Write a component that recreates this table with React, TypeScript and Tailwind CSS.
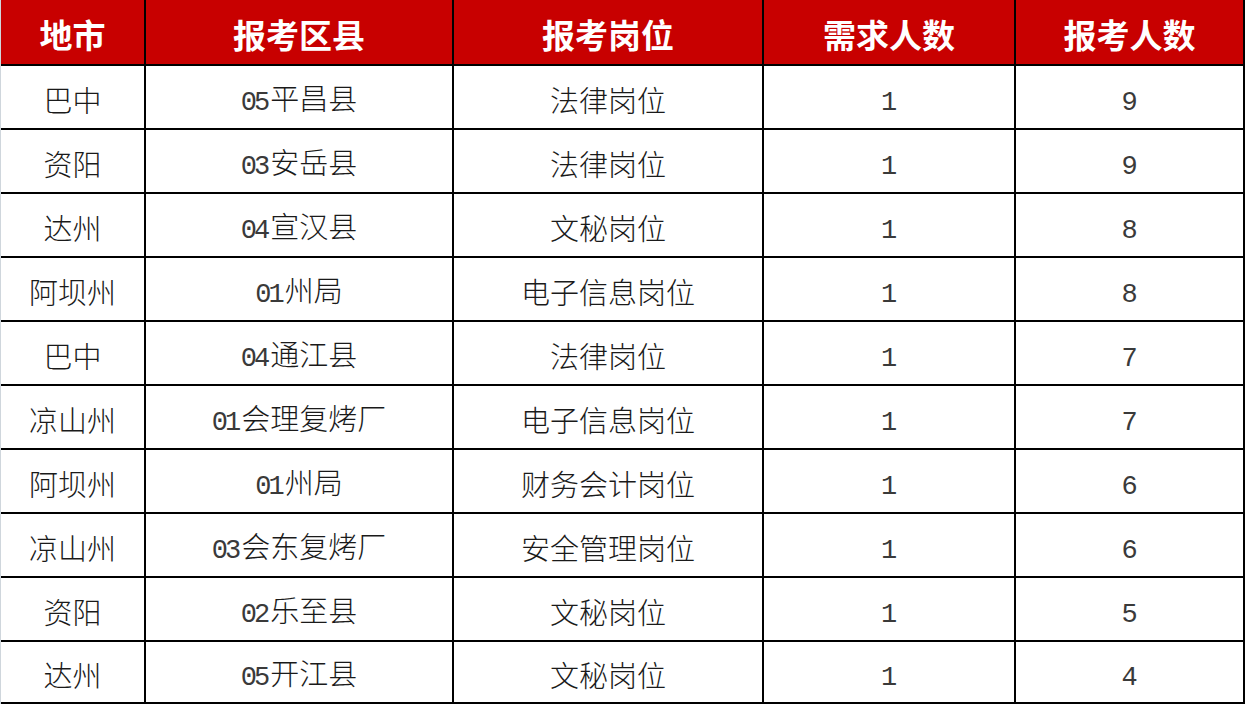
const HEADERS = ["地市", "报考区县", "报考岗位", "需求人数", "报考人数"];

const ROWS: [string, string, string, string, string][] = [
  ["巴中", "05平昌县", "法律岗位", "1", "9"],
  ["资阳", "03安岳县", "法律岗位", "1", "9"],
  ["达州", "04宣汉县", "文秘岗位", "1", "8"],
  ["阿坝州", "01州局", "电子信息岗位", "1", "8"],
  ["巴中", "04通江县", "法律岗位", "1", "7"],
  ["凉山州", "01会理复烤厂", "电子信息岗位", "1", "7"],
  ["阿坝州", "01州局", "财务会计岗位", "1", "6"],
  ["凉山州", "03会东复烤厂", "安全管理岗位", "1", "6"],
  ["资阳", "02乐至县", "文秘岗位", "1", "5"],
  ["达州", "05开江县", "文秘岗位", "1", "4"],
];

const COLS = "grid-cols-[143px_308px_310px_252px_229px]";

// digits in the source look like SimSun half-width numerals
function Cell({ text }: { text: string }) {
  const parts = text.split(/(\d+)/).filter(Boolean);
  return (
    <span>
      {parts.map((p, i) =>
        /^\d+$/.test(p) ? (
          <span
            key={i}
            className="font-['Liberation_Mono',monospace] text-[27px] tracking-[-3px] mr-[3px] text-[#3a3a3a]"
          >
            {p}
          </span>
        ) : (
          <span key={i}>{p}</span>
        )
      )}
    </span>
  );
}

export default function App() {
  return (
    <div className="w-[1248px] h-[706px] bg-white overflow-hidden">
      <div className="w-[1245px] border-l border-l-[#cfd6dc] font-['Noto_Sans_CJK_SC',sans-serif]">
        <div className={`grid ${COLS} h-[64px] bg-[#c80000] text-white font-bold text-[33px] border-r-2 border-black`}>
          {HEADERS.map((h, i) => (
            <div
              key={h}
              className={`flex items-center justify-center pt-[5px] ${i > 0 ? "border-l-2 border-black" : ""}`}
            >
              {h}
            </div>
          ))}
        </div>
        {ROWS.map((row, r) => (
          <div
            key={r}
            className={`grid ${COLS} h-[64px] border-t-2 border-r-2 border-black text-[29px] font-light text-[#1a1a1a] ${
              r === ROWS.length - 1 ? "border-b-2" : ""
            }`}
          >
            {row.map((c, i) => (
              <div
                key={i}
                className={`flex items-center justify-center pt-[5px] ${i > 0 ? "border-l-2 border-black" : ""}`}
              >
                <Cell text={c} />
              </div>
            ))}
          </div>
        ))}
      </div>
    </div>
  );
}
